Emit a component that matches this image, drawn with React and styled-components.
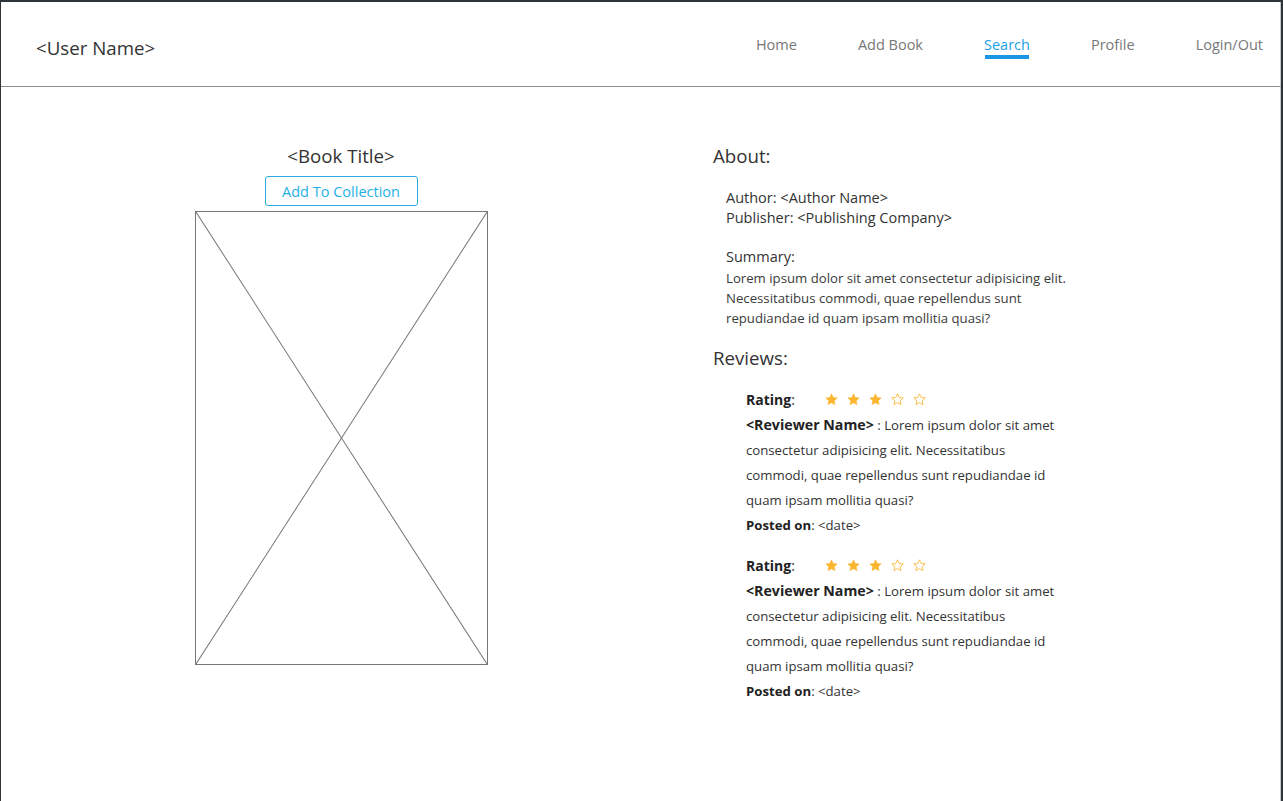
import React from "react";
import styled, { createGlobalStyle } from "styled-components";

const GlobalStyle = createGlobalStyle`
  html, body {
    margin: 0;
    padding: 0;
    background: #ffffff;
  }
  * {
    box-sizing: border-box;
  }
`;

const navItems = ["Home", "Add Book", "Search", "Profile", "Login/Out"];

const reviews = [
  {
    rating: 3,
    text: "Lorem ipsum dolor sit amet consectetur adipisicing elit. Necessitatibus commodi, quae repellendus sunt repudiandae id quam ipsam mollitia quasi?",
  },
  {
    rating: 3,
    text: "Lorem ipsum dolor sit amet consectetur adipisicing elit. Necessitatibus commodi, quae repellendus sunt repudiandae id quam ipsam mollitia quasi?",
  },
];

function Star({ filled }) {
  return (
    <svg width="13" height="13" viewBox="0 0 24 24">
      <polygon
        points="12,1.5 15.1,8.3 22.5,9.1 17,14.1 18.5,21.5 12,17.8 5.5,21.5 7,14.1 1.5,9.1 8.9,8.3"
        fill={filled ? "#fbb52f" : "none"}
        stroke="#fbb52f"
        strokeWidth={filled ? 1 : 1.6}
        strokeLinejoin="round"
      />
    </svg>
  );
}

export default function App() {
  const active = "Search";

  return (
    <Frame>
      <GlobalStyle />
      <Header>
        <UserName>&lt;User Name&gt;</UserName>
        <Nav>
          {navItems.map((item) => (
            <NavItem key={item} active={item === active}>
              {item}
            </NavItem>
          ))}
        </Nav>
      </Header>

      <Main>
        <BookColumn>
          <BookTitle>&lt;Book Title&gt;</BookTitle>
          <CollectButton>Add To Collection</CollectButton>
          <Cover>
            <svg width="100%" height="100%" preserveAspectRatio="none" viewBox="0 0 100 100">
              <line x1="0" y1="0" x2="100" y2="100" stroke="#777" strokeWidth="1" vectorEffect="non-scaling-stroke" />
              <line x1="100" y1="0" x2="0" y2="100" stroke="#777" strokeWidth="1" vectorEffect="non-scaling-stroke" />
            </svg>
          </Cover>
        </BookColumn>

        <InfoColumn>
          <SectionTitle>About:</SectionTitle>
          <AboutBlock>
            <div>Author: &lt;Author Name&gt;</div>
            <div>Publisher: &lt;Publishing Company&gt;</div>
            <Summary>
              <div>Summary:</div>
              <SummaryText>
                Lorem ipsum dolor sit amet consectetur adipisicing elit.
                <br />
                Necessitatibus commodi, quae repellendus sunt
                <br />
                repudiandae id quam ipsam mollitia quasi?
              </SummaryText>
            </Summary>
          </AboutBlock>

          <SectionTitle spaced>Reviews:</SectionTitle>
          <ReviewList>
            {reviews.map((r, i) => (
              <Review key={i}>
                <RatingRow>
                  <RatingLabel>
                    <b>Rating</b>:
                  </RatingLabel>
                  <Stars>
                    {[0, 1, 2, 3, 4].map((n) => (
                      <Star key={n} filled={n < r.rating} />
                    ))}
                  </Stars>
                </RatingRow>
                <ReviewText>
                  <b>&lt;Reviewer Name&gt;</b> : {r.text}
                </ReviewText>
                <div>
                  <b>Posted on</b>: &lt;date&gt;
                </div>
              </Review>
            ))}
          </ReviewList>
        </InfoColumn>
      </Main>
    </Frame>
  );
}

const Frame = styled.div`
  width: 1283px;
  height: 801px;
  border-top: 2px solid #2f333a;
  border-left: 1px solid #2f333a;
  border-right: 2px solid #2f333a;
  font-family: "Open Sans", "Noto Sans", sans-serif;
  color: #333333;
  overflow: hidden;
  background: #ffffff;
`;

const Header = styled.header`
  height: 85px;
  display: flex;
  align-items: center;
  justify-content: space-between;
  padding: 0 17px 0 35px;
  border-bottom: 1px solid #8c8c8c;
  border-right: 1px solid #c8c8c8;
`;

const UserName = styled.div`
  font-size: 18.7px;
  color: #333333;
  margin-top: 6px;
`;

const Nav = styled.nav`
  display: flex;
  gap: 61px;
  align-items: center;
  margin-top: 2px;
`;

const NavItem = styled.a`
  position: relative;
  font-size: 14.5px;
  color: ${(p) => (p.active ? "#1c9fe6" : "#777777")};
  padding-bottom: 2px;

  &::after {
    content: "";
    display: ${(p) => (p.active ? "block" : "none")};
    position: absolute;
    left: 1px;
    right: 1px;
    bottom: -3px;
    height: 4px;
    background: #1a96e4;
  }
`;

const Main = styled.main`
  display: grid;
  grid-template-columns: 680px 1fr;
  height: calc(100% - 85px);
  border-right: 1px solid #c8c8c8;
`;

const BookColumn = styled.section`
  display: flex;
  flex-direction: column;
  align-items: center;
  padding-top: 57px;
`;

const BookTitle = styled.h1`
  margin: 0;
  font-size: 18.7px;
  font-weight: 400;
  line-height: 24px;
  color: #333333;
`;

const CollectButton = styled.button`
  margin-top: 8px;
  height: 30px;
  width: 153px;
  border: 1px solid #2aabe0;
  border-radius: 3px;
  background: #ffffff;
  color: #1eb0e4;
  font-family: "Open Sans", "Noto Sans", sans-serif;
  font-size: 14.5px;
  padding: 0;
`;

const Cover = styled.div`
  margin-top: 5px;
  width: 293px;
  height: 454px;
  border: 1px solid #777777;
  display: flex;

  svg {
    display: block;
  }
`;

const InfoColumn = styled.section`
  padding: 57px 0 0 32px;
`;

const SectionTitle = styled.h2`
  margin: ${(p) => (p.spaced ? "18px" : "0")} 0 0;
  font-size: 18.7px;
  font-weight: 400;
  line-height: 24px;
  color: #333333;
`;

const AboutBlock = styled.div`
  margin-top: 20px;
  padding-left: 13px;
  font-size: 14.5px;
  line-height: 20px;
  color: #333333;
`;

const Summary = styled.div`
  margin-top: 19px;
`;

const SummaryText = styled.div`
  margin-top: 1px;
  font-size: 13.2px;
  line-height: 20px;
  color: #3a3a3a;
`;

const ReviewList = styled.div`
  margin-top: 17px;
  padding-left: 33px;
  width: 360px;
`;

const Review = styled.article`
  font-size: 13.2px;
  line-height: 25px;
  color: #333333;
  margin-bottom: 15px;

  b {
    font-weight: 700;
    color: #222222;
  }
`;

const RatingRow = styled.div`
  display: flex;
  align-items: center;
  height: 25px;
`;

const RatingLabel = styled.div`
  width: 79px;
  font-size: 14px;
`;

const Stars = styled.div`
  display: flex;
  gap: 9px;

  svg {
    display: block;
  }
`;

const ReviewText = styled.p`
  margin: 0;
  width: 318px;

  b {
    font-size: 14.2px;
  }
`;
